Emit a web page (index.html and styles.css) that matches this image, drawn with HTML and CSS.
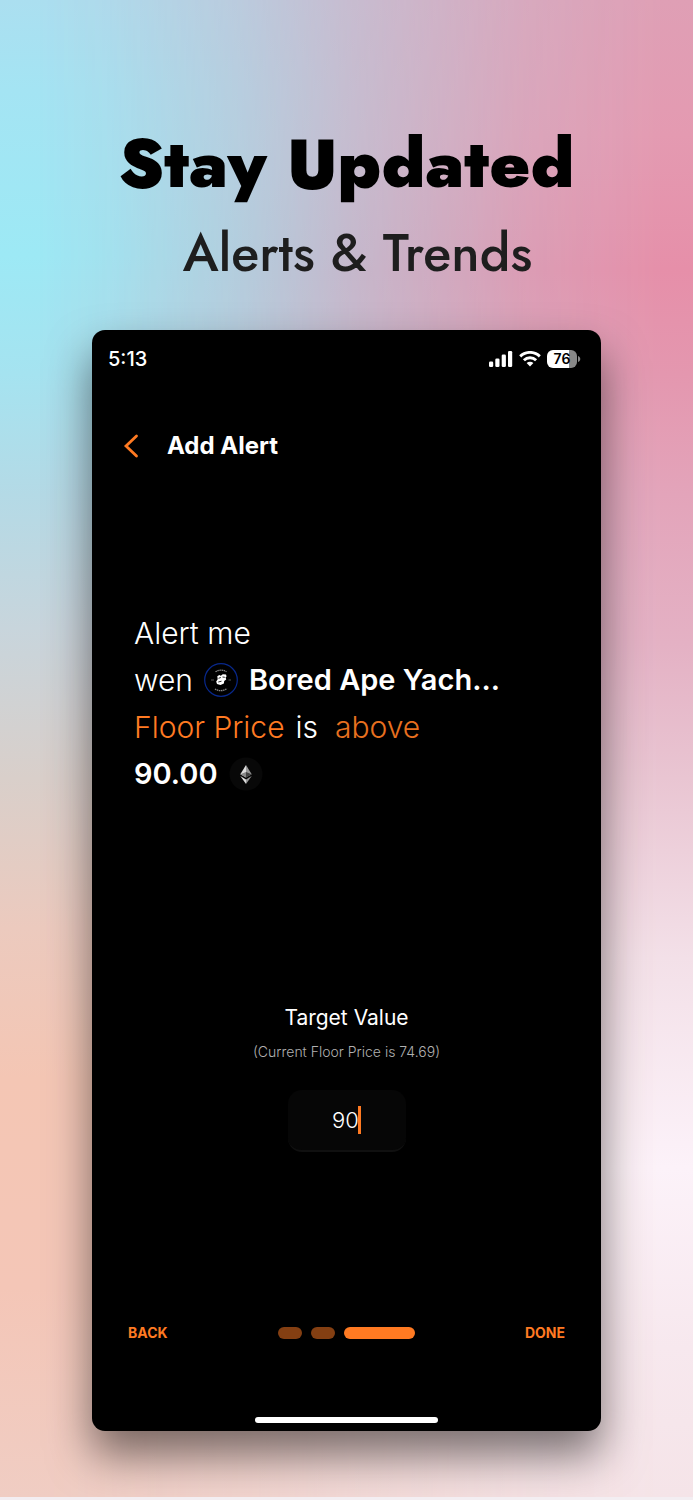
FILE: index.html
```html
<!DOCTYPE html>
<html lang="en">
<head>
<meta charset="utf-8">
<meta name="viewport" content="width=device-width, initial-scale=1">
<title>Stay Updated</title>
<link rel="stylesheet" href="styles.css">
</head>
<body>
<div class="poster">
  <header class="intro">
    <h1 class="headline">Stay Updated</h1>
    <p class="tagline">Alerts &amp; Trends</p>
  </header>
  <main class="phone">
    <div class="status">
      <span class="time">5:13</span>
      <div class="indicators">
        <svg class="signal" viewBox="0 0 24 16" width="24" height="16" fill="#fff" aria-hidden="true"><rect y="10.500" width="4.200" height="5.500" rx="1.300"/><rect x="6.300" y="7.500" width="4.200" height="8.500" rx="1.300"/><rect x="12.700" y="3.500" width="4.200" height="12.500" rx="1.300"/><rect x="19" width="4.200" height="16" rx="1.300"/></svg>
        <svg class="wifi" viewBox="0 0 22 16" width="22" height="16" fill="none" stroke="#fff" stroke-width="2.900" aria-hidden="true"><path d="M1.200 5.400a14 14 0 0 1 19.600 0"/><path d="M4.900 9.200a8.700 8.700 0 0 1 12.200 0"/><path d="M11 15.600l3.400-3.500a4.900 4.900 0 0 0-6.800 0z" fill="#fff" stroke="none"/></svg>
        <div class="battery"><span class="cell">76</span><svg viewBox="0 0 3 6" width="3" height="6" aria-hidden="true"><path d="M0 0c3 1 3 5 0 6z" fill="#888"/></svg></div>
      </div>
    </div>
    <div class="topbar">
      <button class="icon-button" type="button" aria-label="Go back"><svg viewBox="0 0 16 24" width="16" height="24" fill="none" stroke="#ff7a22" stroke-width="2.800" stroke-linecap="round"><path d="M13.500 2L3 12l10.500 10"/></svg></button>
      <h2 class="title">Add Alert</h2>
    </div>
    <section class="sentence">
      <div class="line">Alert me</div>
      <div class="line"><span>wen</span>
        <svg class="token" viewBox="0 0 34 34" width="34" height="34" aria-hidden="true"><circle cx="17" cy="17" r="16.300" fill="#000" stroke="#08288c" stroke-width="1.200"/><path d="M11.500 8.800c3-2.200 8-2.200 11 0M11 26c3.500 2.300 8.500 2.300 12-.5" fill="none" stroke="#888" stroke-width="1.300" stroke-dasharray="1.500 .6"/><path d="M7 17h3M24.500 17h2.500" stroke="#555"/><path d="M13.300 13.200l2-1.200 1.500.7 2-1.500 3.200.3.600 2-1 .8.600 2.200-2 1.600-.3 2.500-3.400 1.400-3.500-1-.8-2.600 1.500-2.200z" fill="#fff"/><path d="M14.500 15.300l2.300-.8M18.500 14l2.300.3M14.300 19l3.200-.8" stroke="#111" stroke-width=".9"/></svg>
        <strong class="name">Bored Ape Yach...</strong></div>
      <div class="line"><span class="metric">Floor Price</span><span class="is">is</span><span class="condition">above</span></div>
      <div class="line"><strong>90.00</strong>
        <svg class="token" viewBox="0 0 34 34" width="34" height="34" aria-hidden="true"><circle cx="17" cy="17" r="16.500" fill="#080808"/><path d="M17 8l-5.700 9.300 5.700 3.300z" fill="#ddd"/><path d="M17 8l5.700 9.300-5.700 3.300z" fill="#999"/><path d="M11.300 17.300L17 15v5.600z" fill="#888"/><path d="M17 15l5.700 2.300-5.700 3.300z" fill="#444"/><path d="M11.300 19l5.700 3.400V27z" fill="#ddd"/><path d="M22.700 19L17 22.400V27z" fill="#999"/></svg></div>
    </section>
    <section class="target">
      <label class="target-label" for="target">Target Value</label>
      <p class="hint">(Current Floor Price is 74.69)</p>
      <div class="field"><input class="target-input" id="target" type="text" inputmode="decimal" value="90"><span class="caret"></span></div>
    </section>
    <nav class="steps">
      <button class="step-button" type="button">BACK</button>
      <div class="dots"><span class="dot"></span><span class="dot"></span><span class="dot current"></span></div>
      <button class="step-button" type="button">DONE</button>
    </nav>
    <div class="home"></div>
  </main>
</div>
</body>
</html>
```
FILE: styles.css
```css
* { box-sizing: border-box; }
body { margin: 0; background: #fff; font-family: Inter, "Liberation Sans", sans-serif; }
h1, h2, p { margin: 0; }
button { padding: 0; border: 0; background: none; font: inherit; cursor: pointer; }
svg { display: block; flex: none; }

.poster {
  position: relative;
  isolation: isolate;
  overflow: hidden;
  padding: 124px 92px 66px;
  border-bottom: 3px solid #f3eef2;
  background: linear-gradient(#abdff0 0%, #a4e4f3 6%, #9de9f5 17%, #a5e3f0 25%, #b4dae6 33%, #c8d5dc 42%, #d9cfca 52%, #eccabe 62%, #f4c6b4 72%, #f4c6b7 86%, #f0cdc3 100%);
}
.poster::before {
  content: "";
  position: absolute;
  inset: 0;
  z-index: -1;
  background: linear-gradient(#df9fb5 0%, #e49ab1 9%, #e68fa9 18%, #e497af 25%, #e3a4ba 33%, #e4b1c4 43%, #e9c5d2 52%, #f3e0e8 64%, #fcf2f9 78%, #f7e8ee 90%, #f5e4e8 100%);
  mask-image: linear-gradient(90deg, transparent 5%, rgba(0, 0, 0, .08) 15%, rgba(0, 0, 0, .3) 34%, rgba(0, 0, 0, .55) 51%, rgba(0, 0, 0, .85) 76%, #000 96%);
}

.intro { text-align: center; font-family: Jost, Futura, Lato, sans-serif; }
.headline { font-size: 68px; font-weight: 900; line-height: 80px; color: #000; white-space: nowrap; }
.tagline { margin-top: 12px; margin-bottom: 40px; padding-left: 22px; font-size: 52px; font-weight: 500; line-height: 74px; color: #1e1e1e; white-space: nowrap; }

.phone {
  display: flex;
  flex-direction: column;
  padding: 16px 16px 8px;
  border-radius: 13px;
  background: #000;
  color: #fff;
  box-shadow: 0 24px 44px rgba(0, 0, 0, .5);
}
.status { display: flex; justify-content: space-between; align-items: center; height: 26px; padding-right: 4px; }
.time { font-size: 20px; font-weight: 500; }
.indicators { display: flex; align-items: center; gap: 6px; }
.battery { display: flex; align-items: center; gap: 1px; }
.cell {
  width: 30px;
  height: 18px;
  border-radius: 6px;
  background: linear-gradient(90deg, #fff 72%, #888 72%);
  color: #000;
  font-size: 14px;
  font-weight: 600;
  line-height: 18px;
  text-align: center;
}

.topbar { display: flex; align-items: center; gap: 28px; height: 40px; margin-top: 54px; padding-left: 15px; }
.title { font-size: 24px; font-weight: 700; line-height: 40px; }

.sentence { display: grid; grid-auto-rows: 47px; margin-top: 143px; padding-left: 26px; font-size: 30px; font-weight: 300; }
.sentence strong { font-size: 29px; font-weight: 600; }
.line { display: flex; align-items: center; gap: 11px; white-space: nowrap; }
.metric { color: #ff7a22; }
.condition { margin-left: 6px; color: #e8701f; }

.target { display: flex; flex-direction: column; align-items: center; margin-top: 206px; }
.target-label { font-size: 21px; line-height: 30px; }
.hint { margin-top: 9px; color: #b0b0b0; font-size: 14px; font-weight: 300; line-height: 20px; }
.field {
  display: flex;
  justify-content: center;
  align-items: center;
  width: 118px;
  height: 62px;
  margin-top: 28px;
  border-bottom: 2px solid #101010;
  border-radius: 14px;
  background: #060606;
}
.target-input { width: 26px; padding: 0; border: 0; outline: 0; background: none; color: #fff; font: 300 22px/30px Inter, sans-serif; }
.caret { width: 3px; height: 28px; background: #ff7a22; }

.steps { display: grid; grid-template-columns: 1fr auto 1fr; align-items: center; margin-top: 169px; padding: 0 20px; }
.step-button { justify-self: start; color: #ff7a22; font-size: 14px; font-weight: 700; line-height: 24px; }
.step-button:last-child { justify-self: end; }
.dots { display: flex; gap: 9px; }
.dot { width: 24px; height: 12px; border-radius: 6px; background: #843f12; }
.current { width: 71px; background: #ff7a22; }
.home { align-self: center; width: 183px; height: 6px; margin-top: 72px; border-radius: 3px; background: #fff; }
```
